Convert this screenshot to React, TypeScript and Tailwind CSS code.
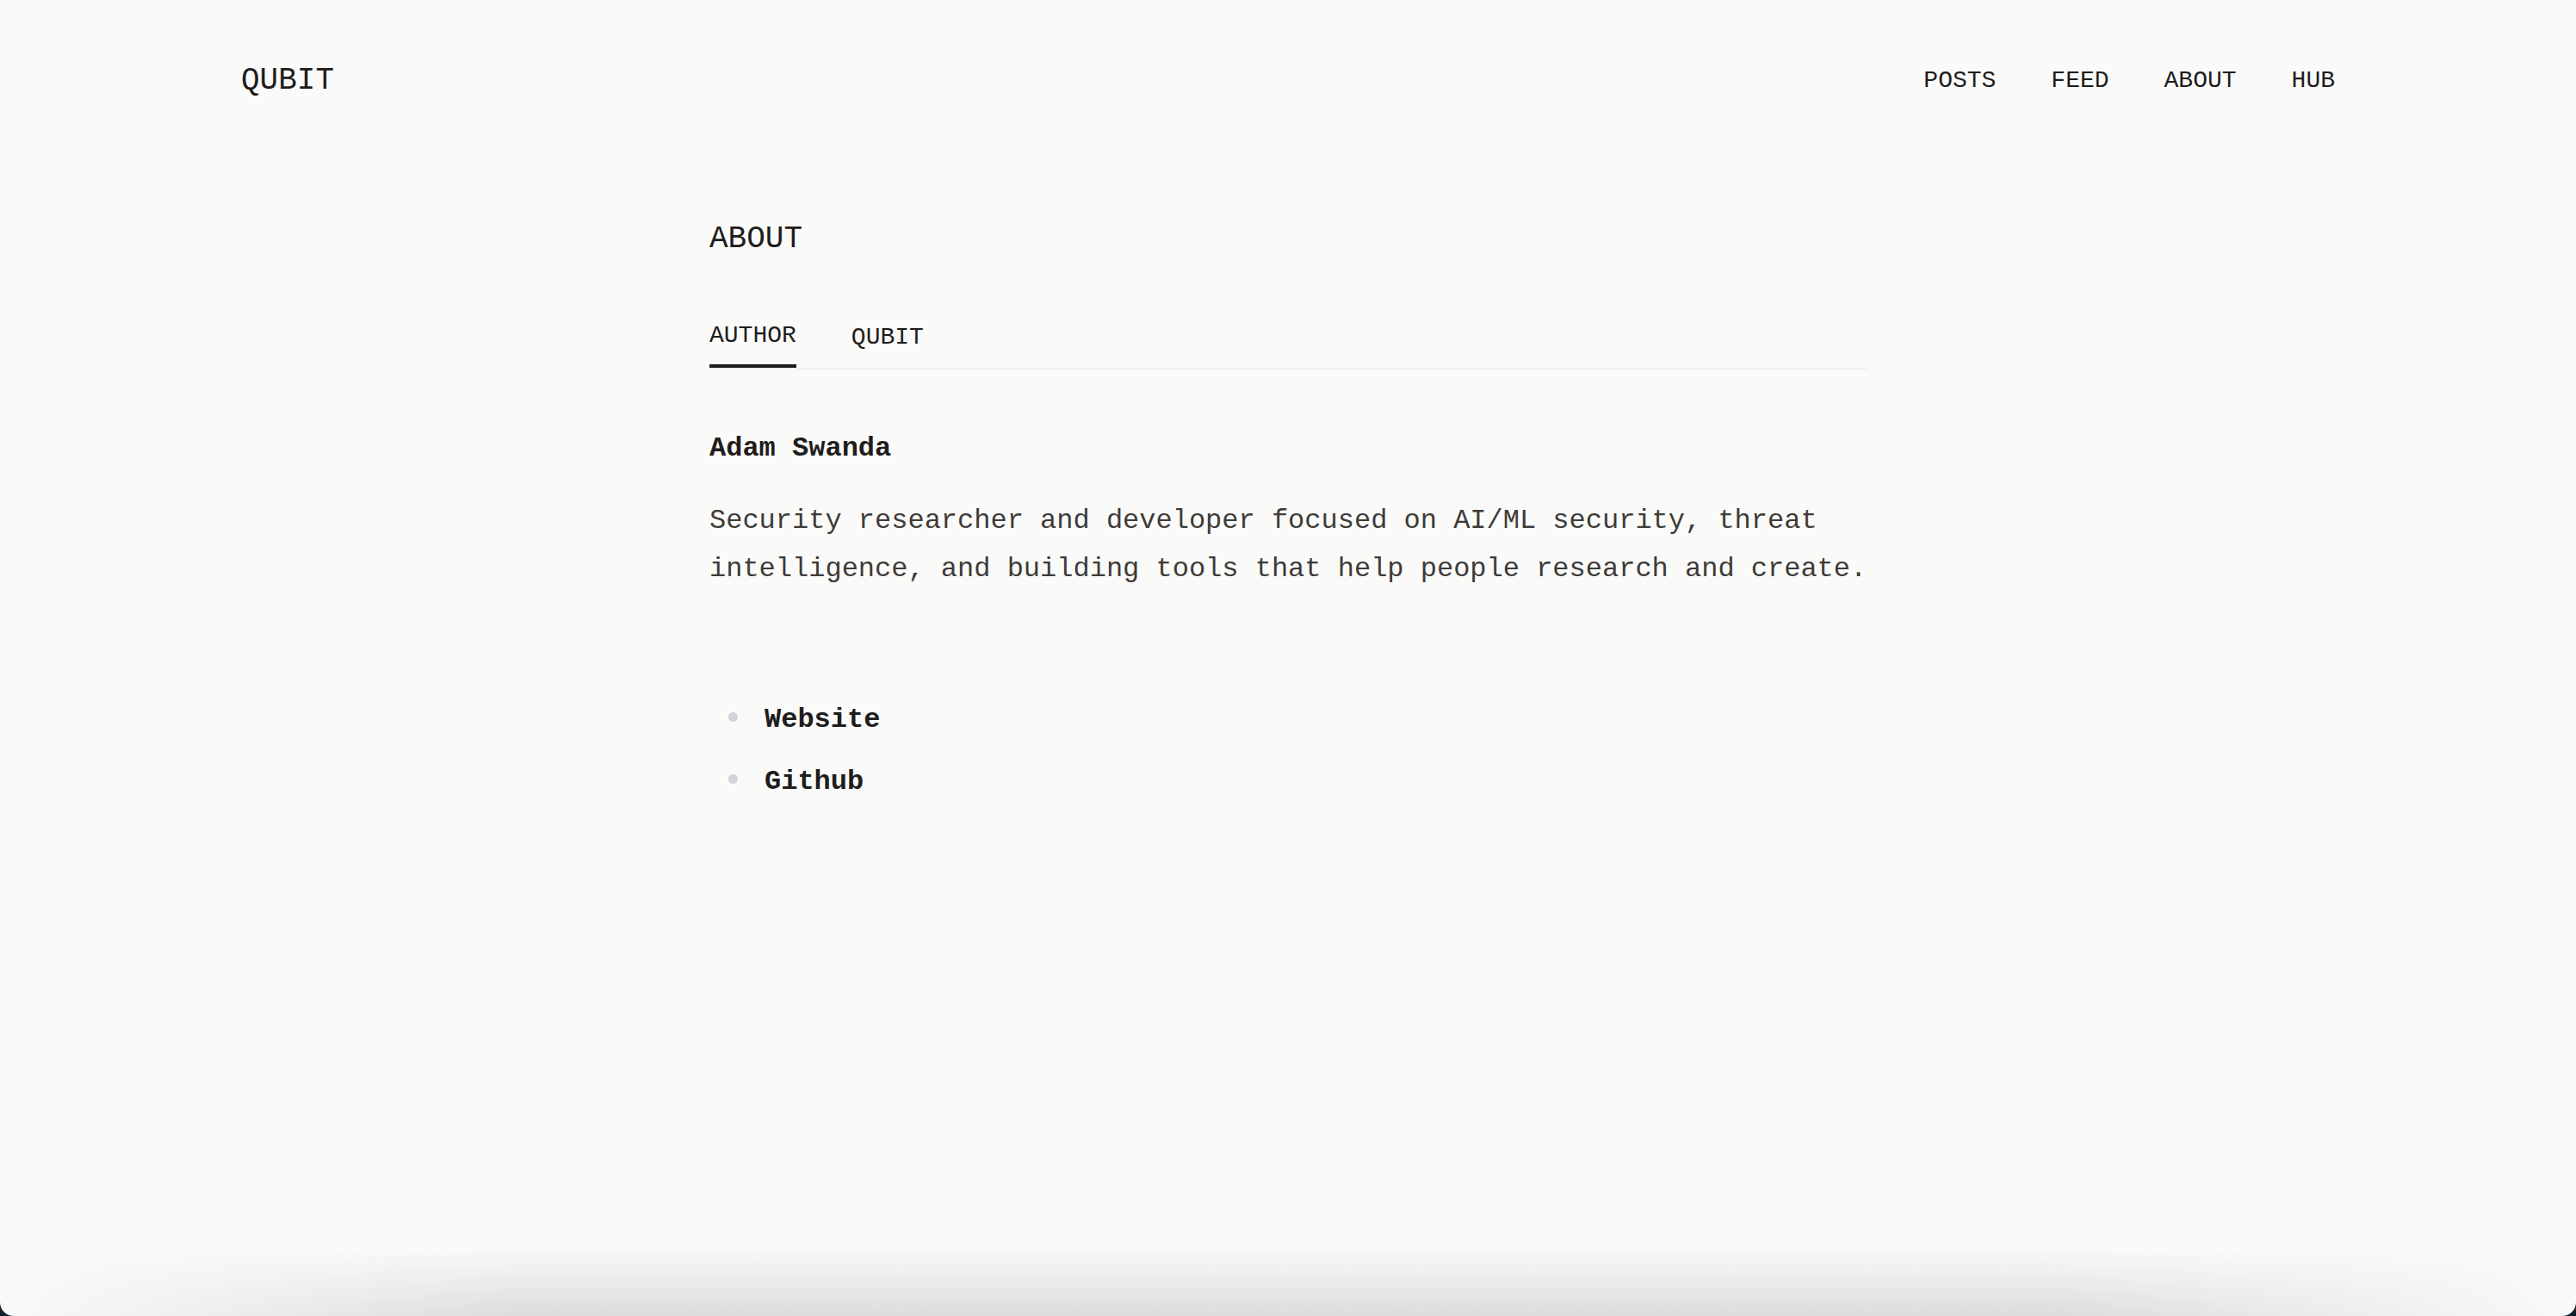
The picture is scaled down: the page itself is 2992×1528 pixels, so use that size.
import React from "react";

const mono = { fontFamily: '"Liberation Mono", "DejaVu Sans Mono", monospace' };

export default function App() {
  return (
    <div className="h-[1528px] w-full bg-[#14202c]" style={mono}>
      <div className="relative h-full w-full overflow-hidden rounded-b-[16px] bg-[#fafaf9]">
        <header className="flex h-[188px] items-center justify-between px-[280px]">
          <div className="text-[36px] leading-[36px] text-[#1f1d1c]">QUBIT</div>
          <nav className="flex items-center gap-[64px] text-[28px] leading-[28px] text-[#1f1d1c]">
            <span>POSTS</span>
            <span>FEED</span>
            <span>ABOUT</span>
            <span>HUB</span>
          </nav>
        </header>

        <main className="mx-auto max-w-[1344px]">
          <h1 className="mt-[72px] text-[36px] leading-[36px] text-[#1f1d1c]">ABOUT</h1>

          <div className="mt-[80px] flex gap-[64px] border-b-[2px] border-[#efefec]">
            <div className="border-b-[4px] border-[#1f1d1c] pb-[19px] text-[28px] leading-[28px] text-[#1f1d1c]">
              AUTHOR
            </div>
            <div className="pt-[2px] pb-[21px] text-[28px] leading-[28px] text-[#1f1d1c]">QUBIT</div>
          </div>

          <h2 className="mt-[76px] text-[32px] font-bold leading-[32px] text-[#1f1d1c]">Adam Swanda</h2>

          <p className="mt-[40px] w-[1360px] text-[32px] leading-[56px] text-[#3f3b38]">
            Security researcher and developer focused on AI/ML security, threat
            <br />
            intelligence, and building tools that help people research and create.
          </p>

          <ul className="mt-[127px] flex flex-col gap-[32px]">
            <li className="flex items-start pl-[22px]">
              <span className="mt-[11px] h-[11px] w-[11px] shrink-0 rounded-full bg-[#d1d5db]" />
              <span className="ml-[31px] text-[32px] font-bold leading-[40px] text-[#1f1d1c]">Website</span>
            </li>
            <li className="flex items-start pl-[22px]">
              <span className="mt-[11px] h-[11px] w-[11px] shrink-0 rounded-full bg-[#d1d5db]" />
              <span className="ml-[31px] text-[32px] font-bold leading-[40px] text-[#1f1d1c]">Github</span>
            </li>
          </ul>
        </main>

        <div className="pointer-events-none absolute inset-x-0 bottom-0 h-[80px] bg-gradient-to-b from-transparent to-[#dcdcdb] [mask-image:linear-gradient(to_right,transparent,black_20%,black_80%,transparent)]" />
      </div>
    </div>
  );
}
